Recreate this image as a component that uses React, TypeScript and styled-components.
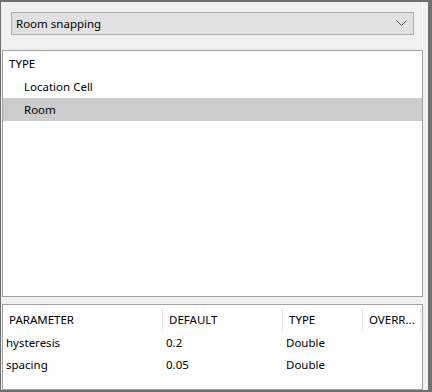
import { FC, Fragment } from 'react';
import styled, { createGlobalStyle } from 'styled-components';

const GlobalStyle = createGlobalStyle`
  html, body {
    margin: 0;
    padding: 0;
    background: #f0f0f0;
  }
  body {
    font-family: 'Segoe UI', 'Noto Sans', 'Open Sans', sans-serif;
    font-size: 11.5px;
    color: #000;
  }
`;

const Frame = styled.div`
  box-sizing: border-box;
  width: 432px;
  height: 392px;
  display: flex;
  border-top: 2px solid #6f6f6f;
  border-left: 1px solid #6f6f6f;
  border-bottom: 2px solid #6f6f6f;
  border-right: 4px solid #6f6f6f;
  background: #f0f0f0;
`;

const Content = styled.div`
  flex: 1;
  display: flex;
  flex-direction: column;
  padding: 10px 0 0 1px;
  border-right: 5px solid #f0f0f0;
  box-shadow: inset -1px 0 0 #ffffff;
`;

const ComboRow = styled.div`
  padding: 0 9px 0 9px;
  height: 38px;
`;

const Combo = styled.div`
  box-sizing: border-box;
  height: 23px;
  display: flex;
  align-items: center;
  justify-content: space-between;
  padding: 0 6px 0 4px;
  border: 1px solid #adadad;
  background: #e1e1e1;
`;

const Panel = styled.div<{ $grow?: boolean; $height?: number }>`
  box-sizing: border-box;
  background: #fff;
  border: 1px solid #a0a0a0;
  ${(p) => (p.$grow ? 'flex: 1;' : '')}
  ${(p) => (p.$height ? `height: ${p.$height}px;` : '')}
`;

const TreeList = styled.div`
  padding-top: 1px;
`;

const TreeRow = styled.div<{ $indent: number; $selected?: boolean }>`
  height: 23px;
  display: flex;
  align-items: center;
  padding-left: ${(p) => p.$indent}px;
  background: ${(p) => (p.$selected ? '#cccccc' : 'transparent')};
`;

const Splitter = styled.div`
  height: 7px;
`;

const Table = styled.div`
  display: grid;
  grid-template-columns: 160px 120px 80px 58px;
`;

const HeadCell = styled.div`
  box-sizing: border-box;
  height: 26px;
  display: flex;
  align-items: center;
  padding: 2px 0 0 6px;
  white-space: nowrap;
  position: relative;

  &::after {
    content: '';
    position: absolute;
    right: 0;
    top: 3px;
    bottom: 0;
    width: 1px;
    background: #e5e5e5;
  }
`;

const Cell = styled.div`
  height: 22px;
  display: flex;
  align-items: center;
  padding-left: 3px;
  white-space: nowrap;
`;

const Chevron: FC = () => (
  <svg width="11" height="7" viewBox="0 0 11 7">
    <path d="M0.5 0.5 L5.5 5.5 L10.5 0.5" fill="none" stroke="#555" strokeWidth="1" />
  </svg>
);

const rows = [
  { name: 'hysteresis', def: '0.2', type: 'Double', over: '' },
  { name: 'spacing', def: '0.05', type: 'Double', over: '' },
];

const App: FC = () => (
  <>
    <GlobalStyle />
    <Frame>
      <Content>
        <ComboRow>
          <Combo>
            <span>Room snapping</span>
            <Chevron />
          </Combo>
        </ComboRow>
        <Panel $grow>
          <TreeList>
            <TreeRow $indent={6}>TYPE</TreeRow>
            <TreeRow $indent={21}>Location Cell</TreeRow>
            <TreeRow $indent={21} $selected>
              Room
            </TreeRow>
          </TreeList>
        </Panel>
        <Splitter />
        <Panel $height={86}>
          <Table>
            <HeadCell>PARAMETER</HeadCell>
            <HeadCell>DEFAULT</HeadCell>
            <HeadCell>TYPE</HeadCell>
            <HeadCell>OVERR...</HeadCell>
            {rows.map((r) => (
              <Fragment key={r.name}>
                <Cell>{r.name}</Cell>
                <Cell>{r.def}</Cell>
                <Cell>{r.type}</Cell>
                <Cell>{r.over}</Cell>
              </Fragment>
            ))}
          </Table>
        </Panel>
      </Content>
    </Frame>
  </>
);

export default App;
